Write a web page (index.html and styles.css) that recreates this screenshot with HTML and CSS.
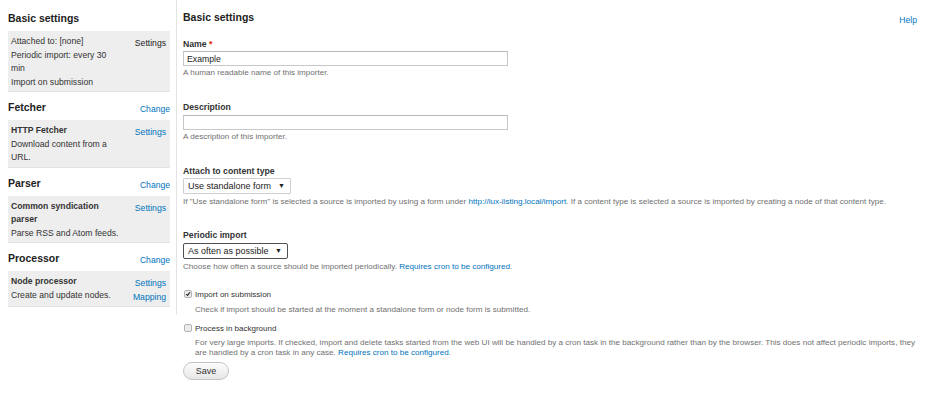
FILE: index.html
```html
<!DOCTYPE html>
<html>
<head>
<meta charset="utf-8">
<link rel="stylesheet" href="styles.css">
</head>
<body>
<div class="page">
  <aside class="sidebar">
    <div class="sec-head"><h3>Basic settings</h3></div>
    <div class="box">
      <div class="box-text">
        <div>Attached to: [none]</div>
        <div>Periodic import: every 30 min</div>
        <div>Import on submission</div>
      </div>
      <div class="box-links"><span class="plain">Settings</span></div>
    </div>

    <div class="sec-head"><h3>Fetcher</h3><a href="#" class="change">Change</a></div>
    <div class="box">
      <div class="box-text">
        <div class="strong">HTTP Fetcher</div>
        <div>Download content from a URL.</div>
      </div>
      <div class="box-links"><a href="#">Settings</a></div>
    </div>

    <div class="sec-head"><h3>Parser</h3><a href="#" class="change">Change</a></div>
    <div class="box">
      <div class="box-text">
        <div class="strong">Common syndication parser</div>
        <div>Parse RSS and Atom feeds.</div>
      </div>
      <div class="box-links"><a href="#">Settings</a></div>
    </div>

    <div class="sec-head"><h3>Processor</h3><a href="#" class="change">Change</a></div>
    <div class="box">
      <div class="box-text">
        <div class="strong">Node processor</div>
        <div>Create and update nodes.</div>
      </div>
      <div class="box-links"><a href="#">Settings</a><a href="#">Mapping</a></div>
    </div>
  </aside>

  <main class="main">
    <div class="main-head">
      <h2>Basic settings</h2>
      <a href="#" class="help">Help</a>
    </div>

    <div class="form-item item-name">
      <label>Name <span class="req">*</span></label>
      <input type="text" class="text-input" value="Example">
      <div class="desc">A human readable name of this importer.</div>
    </div>

    <div class="form-item item-desc">
      <label>Description</label>
      <input type="text" class="text-input" value="">
      <div class="desc">A description of this importer.</div>
    </div>

    <div class="form-item item-attach">
      <label>Attach to content type</label>
      <div class="select-wrap">
        <select class="select"><option>Use standalone form</option></select>
        <span class="arrow">▼</span>
      </div>
      <div class="desc sel-desc">If "Use standalone form" is selected a source is imported by using a form under <a href="#">http://lux-listing.local/import</a>. If a content type is selected a source is imported by creating a node of that content type.</div>
    </div>

    <div class="form-item item-periodic">
      <label>Periodic import</label>
      <div class="select-wrap">
        <select class="select focused"><option>As often as possible</option></select>
        <span class="arrow">▼</span>
      </div>
      <div class="desc sel-desc">Choose how often a source should be imported periodically. <a href="#">Requires cron to be configured</a>.</div>
    </div>

    <div class="check-item item-import">
      <div class="check-row">
        <span class="check">
          <svg viewBox="0 0 8 8" width="8" height="8"><path d="M1.6 4.2 L3.3 5.9 L6.6 1.8" fill="none" stroke="#222" stroke-width="1.5"/></svg>
        </span>
        <span class="check-label">Import on submission</span>
      </div>
      <div class="desc check-desc">Check if import should be started at the moment a standalone form or node form is submitted.</div>
    </div>

    <div class="check-item item-bg">
      <div class="check-row">
        <span class="check"></span>
        <span class="check-label">Process in background</span>
      </div>
      <div class="desc check-desc">For very large imports. If checked, import and delete tasks started from the web UI will be handled by a cron task in the background rather than by the browser. This does not affect periodic imports, they are handled by a cron task in any case. <a href="#">Requires cron to be configured</a>.</div>
    </div>

    <button class="save">Save</button>
  </main>
</div>
</body>
</html>
```

FILE: styles.css
```css
* { box-sizing: border-box; }
html, body { margin: 0; padding: 0; background: #fff; }
body {
  font-family: "Liberation Sans", Arial, sans-serif;
  color: #333;
}
a { color: #0074bd; text-decoration: none; }

.page { display: flex; align-items: flex-start; }

.sidebar {
  width: 177px;
  flex: none;
  border-right: 1px solid #e3e3e3;
  padding: 11px 6px 0 8px;
}
.sec-head {
  display: flex;
  justify-content: space-between;
  align-items: baseline;
  margin-bottom: 6px;
}
.sec-head h3 {
  margin: 0;
  font-size: 10.5px;
  line-height: 14px;
  font-weight: bold;
  color: #222;
}
.sec-head .change { font-size: 8.6px; position: relative; top: 1px; }

.box {
  display: flex;
  background: #eeeeee;
  border-bottom: 1px solid #e2e2e2;
  padding: 4px 4px 2px 3px;
  margin-bottom: 8px;
  font-size: 8.64px;
  line-height: 13.5px;
}
.box-text { flex: 0 0 110px; min-width: 0; }
.box-text .strong { font-weight: bold; }
.box-links {
  margin-left: auto;
  display: flex;
  flex-direction: column;
  align-items: flex-end;
  padding-top: 2px;
}
.box-links .plain { color: #222; }

.main {
  flex: 1;
  padding: 10px 19px 0 6px;
}
.main-head {
  display: flex;
  justify-content: space-between;
  align-items: flex-start;
}
.main-head h2 {
  margin: 0;
  font-size: 10.5px;
  line-height: 14px;
  font-weight: bold;
  color: #222;
}
.help { font-size: 8.6px; line-height: 14px; position: relative; top: 3px; }

.form-item label {
  display: block;
  font-size: 8.7px;
  font-weight: bold;
  line-height: 11px;
  margin-bottom: 1.5px;
  color: #333;
}
.req { color: #e32700; }
.item-name { margin-top: 14.5px; margin-bottom: 24px; }
.item-desc { margin-bottom: 23.5px; }
.item-attach { margin-bottom: 22.3px; }
.item-periodic { margin-bottom: 17px; }

.text-input {
  display: block;
  width: 325px;
  height: 15px;
  margin: 0;
  border: 1px solid #c8c8c8;
  border-top-color: #b8b8b8;
  padding: 0 3px;
  font-family: inherit;
  font-size: 8.7px;
  color: #222;
  background: #fff;
  outline: none;
}

.desc {
  font-size: 8.1px;
  line-height: 10.4px;
  color: #707070;
  margin-top: 2px;
}
.sel-desc { margin-top: 3px; }

.select-wrap { position: relative; display: flex; width: fit-content; }
.select {
  appearance: none;
  -webkit-appearance: none;
  height: 16px;
  margin: 0;
  padding: 0 18px 0 4px;
  border: 1px solid #cfcfcf;
  border-radius: 1px;
  background: #fff;
  font-family: inherit;
  font-size: 9px;
  color: #222;
  outline: none;
}
.select.focused { border-color: #505050; border-radius: 2px; }
.arrow {
  position: absolute;
  right: 6px;
  top: 4px;
  font-size: 7px;
  line-height: 8px;
  color: #222;
  pointer-events: none;
}

.check-item { padding-left: 1px; }
.check-row { display: flex; align-items: center; height: 11px; }
.check {
  width: 8px;
  height: 8px;
  border: 1px solid #b3b3b3;
  border-radius: 2px;
  background: #ececec;
  margin-right: 3px;
  display: flex;
  align-items: center;
  justify-content: center;
  flex: none;
}
.check svg { display: block; }
.check-label { font-size: 8px; line-height: 11px; color: #333; }
.check-desc { padding-left: 11px; }
.item-import { margin-bottom: 7.3px; }
.item-import .check-desc { margin-top: 5px; }
.item-bg .check-desc { margin-top: 4.3px; }

.save {
  display: block;
  margin-top: 3px;
  width: 46px;
  height: 18px;
  border: 1px solid #c4c4c4;
  border-radius: 9px;
  background: linear-gradient(#fdfdfd, #e6e6e6);
  font-family: inherit;
  font-size: 9px;
  color: #333;
  padding: 0;
}
```
